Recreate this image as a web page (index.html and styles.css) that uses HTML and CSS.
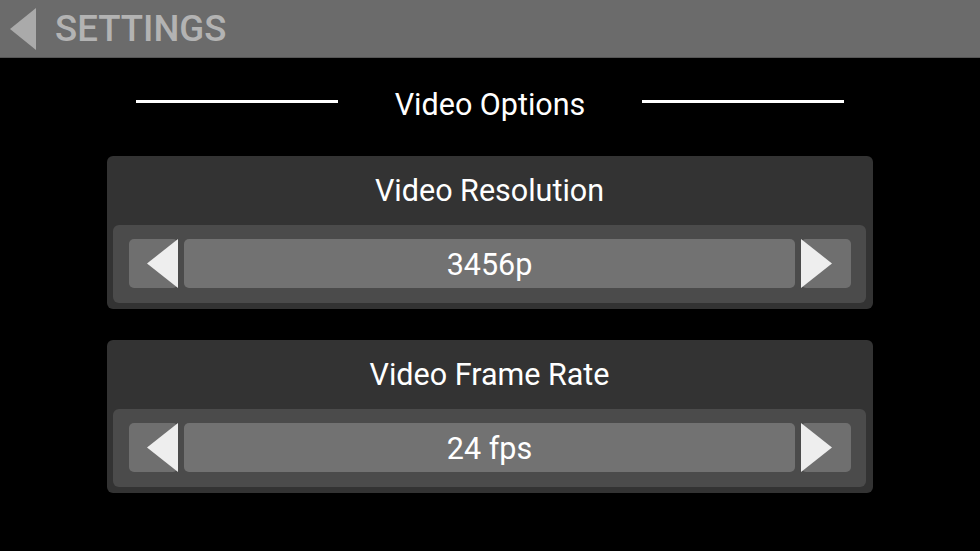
FILE: index.html
```html
<!DOCTYPE html>
<html>
<head>
<meta charset="utf-8">
<link rel="stylesheet" href="styles.css">
</head>
<body>
<header class="topbar">
  <svg class="back" width="26" height="42" viewBox="0 0 26 42"><polygon points="26,0 26,42 0,21" fill="#aaaaaa"/></svg>
  <span class="topbar-title">SETTINGS</span>
</header>
<div class="section-title">
  <span class="rule"></span>
  <span class="section-text">Video Options</span>
  <span class="rule"></span>
</div>
<div class="card">
  <div class="card-title">Video Resolution</div>
  <div class="picker">
    <div class="btn btn-left"><svg width="31" height="49" viewBox="0 0 31 49"><polygon points="31,0 31,49 0,24.5" fill="#eeeeee"/></svg></div>
    <div class="value">3456p</div>
    <div class="btn btn-right"><svg width="31" height="49" viewBox="0 0 31 49"><polygon points="0,0 0,49 31,24.5" fill="#eeeeee"/></svg></div>
  </div>
</div>
<div class="card card-second">
  <div class="card-title">Video Frame Rate</div>
  <div class="picker">
    <div class="btn btn-left"><svg width="31" height="49" viewBox="0 0 31 49"><polygon points="31,0 31,49 0,24.5" fill="#eeeeee"/></svg></div>
    <div class="value">24 fps</div>
    <div class="btn btn-right"><svg width="31" height="49" viewBox="0 0 31 49"><polygon points="0,0 0,49 31,24.5" fill="#eeeeee"/></svg></div>
  </div>
</div>
</body>
</html>
```

FILE: styles.css
```css
html, body {
  margin: 0;
  padding: 0;
  background: #000;
  font-family: Roboto, "Liberation Sans", sans-serif;
  width: 980px;
  height: 551px;
  overflow: hidden;
}

.topbar {
  height: 57px;
  background: #6b6b6b;
  border-bottom: 1px solid #555;
  display: flex;
  align-items: center;
  padding-left: 10px;
  box-sizing: content-box;
}

.back {
  display: block;
  margin-right: 19px;
}

.topbar-title {
  font-size: 36.6px;
  font-weight: 500;
  color: #b3b3b3;
  line-height: 1;
  margin-top: 2px;
}

.section-title {
  display: flex;
  justify-content: center;
  align-items: center;
  height: 40px;
  margin-top: 26px;
}

.rule {
  width: 202px;
  height: 3px;
  background: #fff;
  margin-top: -5px;
}

.section-text {
  color: #fff;
  font-size: 30.5px;
  margin: 0 57px;
  line-height: 40px;
  padding-top: 2px;
}

.card {
  margin: 32px 107px 0 107px;
  background: #333333;
  border-radius: 6px;
  padding: 14px 7px 6px 6px;
  height: 153px;
  box-sizing: border-box;
}

.card-second {
  margin-top: 31px;
}

.card-title {
  color: #fff;
  font-size: 30.5px;
  line-height: 40px;
  height: 40px;
  text-align: center;
  margin-bottom: 15px;
  padding-top: 1px;
  box-sizing: border-box;
}

.picker {
  background: #4b4b4b;
  border-radius: 6px;
  height: 78px;
  box-sizing: border-box;
  padding: 14px 15px 15px 16px;
  display: flex;
  gap: 6px;
}

.btn {
  width: 49px;
  height: 49px;
  background: #6f6f6f;
  border-radius: 5px;
  display: flex;
}

.btn svg {
  display: block;
}

.btn-left {
  justify-content: flex-end;
}

.btn-right {
  width: 50px;
  justify-content: flex-start;
}

.value {
  flex: 1;
  background: #727272;
  border-radius: 5px;
  color: #fff;
  font-size: 30.5px;
  line-height: 49px;
  padding-top: 1px;
  box-sizing: border-box;
  text-align: center;
}
```
